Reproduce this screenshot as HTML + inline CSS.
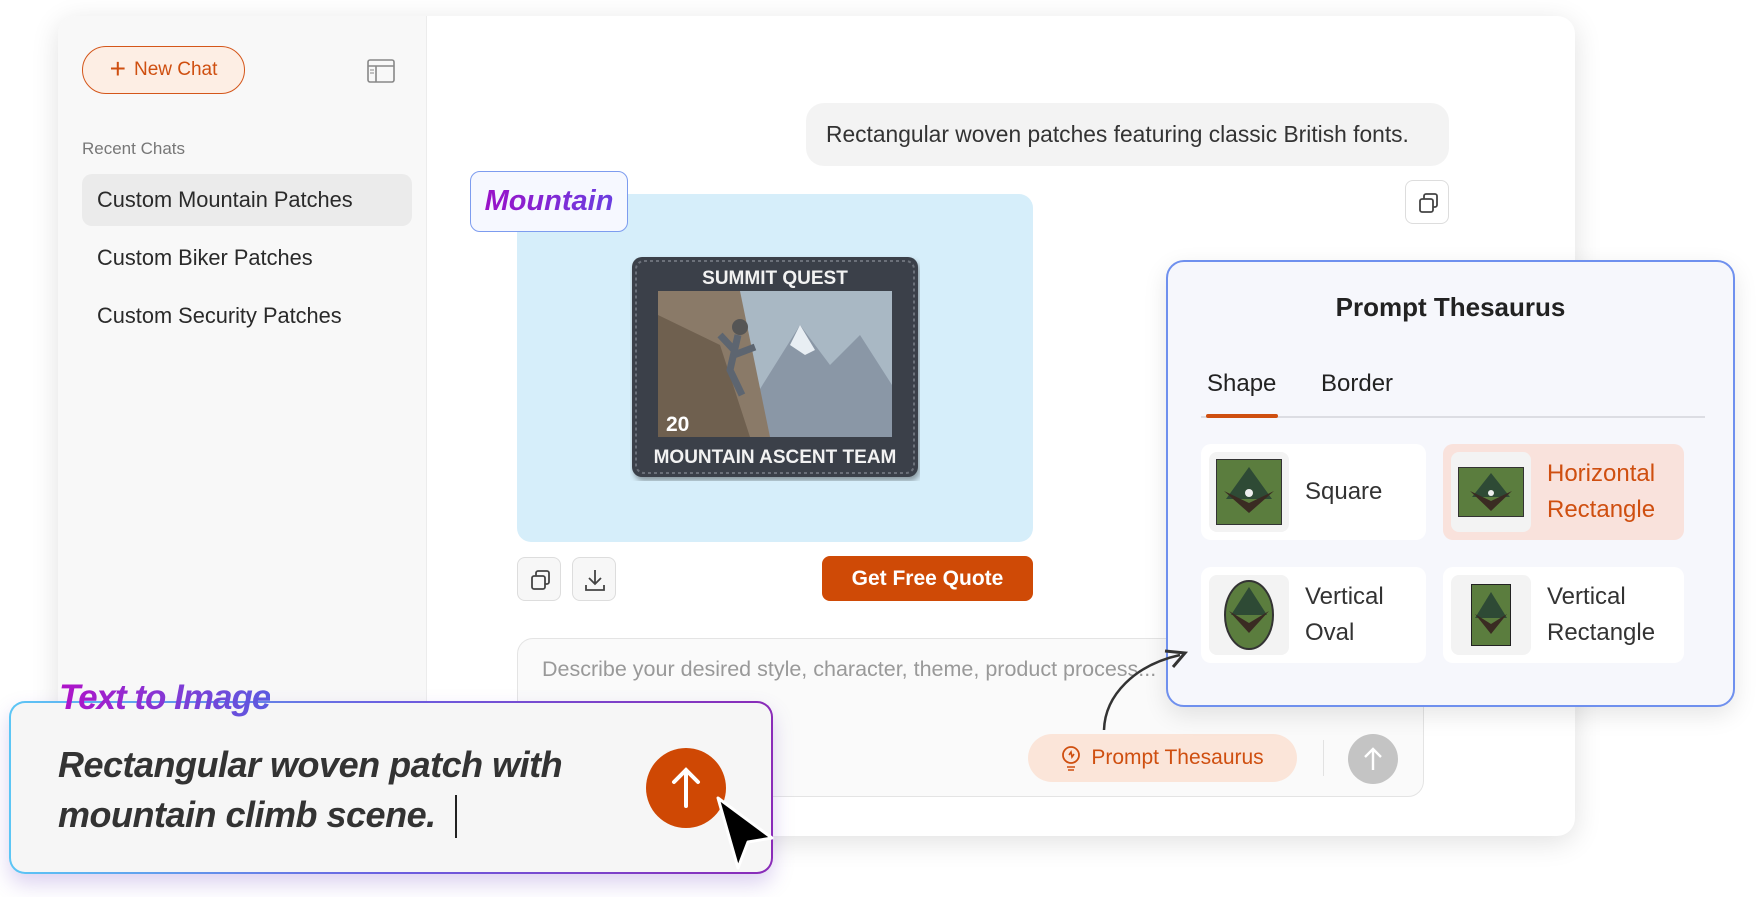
<!DOCTYPE html>
<html><head><meta charset="utf-8"><style>
*{box-sizing:border-box;margin:0;padding:0}
body{width:1757px;height:897px;background:#fff;font-family:"Liberation Sans","DejaVu Sans",sans-serif;position:relative;overflow:hidden;color:#333}
.abs{position:absolute}
.card{left:58px;top:16px;width:1517px;height:820px;background:#fff;border-radius:18px;box-shadow:0 6px 28px rgba(0,0,0,.12);overflow:hidden}
.side{left:0;top:0;width:369px;height:820px;background:#f8f8f8;border-right:1px solid #ececec}
.newchat{left:24px;top:30px;width:163px;height:48px;border:1.5px solid #d4561a;background:#fdeee4;border-radius:24px;color:#cf4f10;font-size:19px;display:flex;align-items:center;justify-content:center;gap:8px}
.item{left:24px;width:330px;height:52px;border-radius:10px;font-size:21.8px;color:#2a2a2a;padding-left:15px;line-height:52px}
.thumb{width:80px;height:80px;background:#f3f3f3;border-radius:8px;display:flex;align-items:center;justify-content:center}
.opt{width:225px;height:96px;background:#fff;border-radius:10px;display:flex;align-items:center;padding-left:8px;gap:16px;font-size:24px;color:#333;line-height:36px}
</style></head><body>
<div class="abs card">
  <div class="abs side">
    <div class="abs newchat"><span style="font-size:28px;line-height:1;margin-top:-3px">+</span>New Chat</div>
    <svg class="abs" style="left:309px;top:43px" width="28" height="24" viewBox="0 0 28 24"><rect x="1" y="1" width="26" height="22" rx="2" fill="none" stroke="#888" stroke-width="1.6"/><line x1="1" y1="7" x2="27" y2="7" stroke="#888" stroke-width="1.6"/><line x1="9" y1="7" x2="9" y2="23" stroke="#888" stroke-width="1.6"/><line x1="3" y1="11" x2="7" y2="11" stroke="#888"/><line x1="3" y1="14" x2="7" y2="14" stroke="#888"/></svg>
    <div class="abs" style="left:24px;top:123px;font-size:17px;color:#777">Recent Chats</div>
    <div class="abs item" style="top:158px;background:#ebebeb">Custom Mountain Patches</div>
    <div class="abs item" style="top:216px">Custom Biker Patches</div>
    <div class="abs item" style="top:274px">Custom Security Patches</div>
  </div>
  <div class="abs" style="left:748px;top:87px;width:643px;height:63px;background:#f3f3f3;border-radius:18px;font-size:22.8px;color:#333;line-height:63px;padding-left:20px;white-space:nowrap">Rectangular woven patches featuring classic British fonts.</div>
  <div class="abs" style="left:1347px;top:164px;width:44px;height:44px;border:1px solid #ddd;border-radius:8px;background:#fff"><svg width="44" height="44" viewBox="0 0 44 44"><rect x="14" y="18" width="13" height="13" rx="2" fill="none" stroke="#444" stroke-width="1.8"/><path d="M18 18v-3a2 2 0 0 1 2-2h9a2 2 0 0 1 2 2v9a2 2 0 0 1-2 2h-2" fill="none" stroke="#444" stroke-width="1.8"/></svg></div>
  <div class="abs" style="left:459px;top:178px;width:516px;height:348px;background:#d6eefa;border-radius:14px"></div>
  <svg class="abs" style="left:572px;top:239px" width="290" height="226" viewBox="0 0 290 226">
    <defs><filter id="sh"><feDropShadow dx="2" dy="4" stdDeviation="3" flood-opacity=".35"/></filter></defs>
    <rect x="2" y="2" width="286" height="220" rx="10" fill="#3a4048" filter="url(#sh)"/>
    <rect x="6" y="6" width="278" height="212" rx="8" fill="none" stroke="#6b7079" stroke-width="2" stroke-dasharray="3 3"/>
    <rect x="28" y="36" width="234" height="146" fill="#a9b8c4"/>
    <polygon points="100,182 170,70 200,110 230,80 262,130 262,182" fill="#8a97a6"/>
    <polygon points="170,70 185,95 175,100 160,90" fill="#e8eef3"/>
    <polygon points="28,36 110,36 140,182 28,182" fill="#8a7a68"/>
    <polygon points="28,60 90,90 120,182 28,182" fill="#6f604f"/>
    <circle cx="110" cy="72" r="8" fill="#555"/><path d="M108 80 L100 115 L112 140 M104 95 L90 80 M104 100 L125 92" stroke="#5d6570" stroke-width="7" fill="none"/>
    <text x="145" y="29" fill="#f2f2f2" font-size="19" font-weight="bold" text-anchor="middle" font-family="Liberation Sans">SUMMIT QUEST</text>
    <text x="36" y="176" fill="#fff" font-size="21" font-weight="bold" font-family="Liberation Sans">20</text>
    <text x="145" y="208" fill="#f2f2f2" font-size="19" font-weight="bold" text-anchor="middle" font-family="Liberation Sans">MOUNTAIN ASCENT TEAM</text>
  </svg>
  <div class="abs" style="left:412px;top:155px;width:158px;height:61px;border:1.5px solid #7d9cef;border-radius:10px;background:#f6f8ff;font-size:29px;font-weight:bold;font-style:italic;line-height:58px;text-align:center"><span style="background:linear-gradient(90deg,#9a12c8,#6a3ee0);-webkit-background-clip:text;color:transparent">Mountain</span></div>
  <div class="abs" style="left:459px;top:541px;width:44px;height:44px;border:1px solid #ddd;border-radius:8px;background:#f7f7f7"><svg width="44" height="44" viewBox="0 0 44 44"><rect x="14" y="18" width="13" height="13" rx="2" fill="none" stroke="#444" stroke-width="1.8"/><path d="M18 18v-3a2 2 0 0 1 2-2h9a2 2 0 0 1 2 2v9a2 2 0 0 1-2 2h-2" fill="none" stroke="#444" stroke-width="1.8"/></svg></div>
  <div class="abs" style="left:514px;top:541px;width:44px;height:44px;border:1px solid #ddd;border-radius:8px;background:#f7f7f7"><svg width="44" height="44" viewBox="0 0 44 44"><path d="M22 12v14M16 20l6 6 6-6M13 27v5h18v-5" fill="none" stroke="#444" stroke-width="1.8"/></svg></div>
  <div class="abs" style="left:764px;top:540px;width:211px;height:45px;background:#cf4a06;border-radius:8px;color:#fff;font-size:21px;font-weight:bold;text-align:center;line-height:45px">Get Free Quote</div>
  <div class="abs" style="left:459px;top:622px;width:907px;height:159px;border:1px solid #e4e4e4;border-radius:16px;background:#fafafa"></div>
  <div class="abs" style="left:484px;top:641px;font-size:21.5px;color:#999;white-space:nowrap">Describe your desired style, character, theme, product process...</div>
  <div class="abs" style="left:970px;top:718px;width:269px;height:48px;background:#fbe5d9;border-radius:24px;color:#cf4f10;font-size:21px;display:flex;align-items:center;justify-content:center;gap:10px"><svg width="20" height="26" viewBox="0 0 20 26"><circle cx="10" cy="10" r="8" fill="none" stroke="#cf4f10" stroke-width="1.8"/><path d="M6 22h8M7 25h6M8 10l2-3 1 5 2-3" fill="none" stroke="#cf4f10" stroke-width="1.6"/></svg>Prompt Thesaurus</div>
  <div class="abs" style="left:1265px;top:724px;width:1px;height:36px;background:#e2e2e2"></div>
  <div class="abs" style="left:1290px;top:718px;width:50px;height:50px;border-radius:50%;background:#c4c4c4"><svg width="50" height="50" viewBox="0 0 50 50"><path d="M25 36V15M17 23l8-8 8 8" fill="none" stroke="#fff" stroke-width="2.4"/></svg></div>
</div>
<div class="abs" style="left:1166px;top:260px;width:569px;height:447px;border:2px solid #6f90ee;border-radius:18px;background:#f6f7fc;box-shadow:0 8px 24px rgba(0,0,0,.1)">
  <div class="abs" style="left:0;top:30px;width:565px;text-align:center;font-size:26px;font-weight:bold;color:#222">Prompt Thesaurus</div>
  <div class="abs" style="left:39px;top:108px;font-size:24px;color:#222">Shape</div>
  <div class="abs" style="left:153px;top:108px;font-size:24px;color:#222">Border</div>
  <div class="abs" style="left:33px;top:154px;width:504px;height:2px;background:#dcdde3"></div>
  <div class="abs" style="left:38px;top:152px;width:72px;height:4px;background:#cf4f10;border-radius:2px"></div>
  <div class="abs opt" style="left:33px;top:182px"><div class="thumb"><svg width="66" height="66"><rect x="0" y="0" width="66" height="66" fill="#5b7d3e" stroke="#333" stroke-width="2"/><path d="M10 40 L33 8 L56 40 Z" fill="#2e4a35"/><path d="M8 32 L33 44 L58 32 L33 54 Z" fill="#3a2b22"/><circle cx="33" cy="34" r="4" fill="#eee"/></svg></div>Square</div>
  <div class="abs opt" style="left:275px;top:182px;width:241px;background:#f9e2dc;color:#cf4f10"><div class="thumb"><svg width="66" height="50"><rect x="0" y="0" width="66" height="50" fill="#5b7d3e" stroke="#333" stroke-width="2"/><path d="M14 30 L33 6 L52 30 Z" fill="#2e4a35"/><path d="M12 24 L33 34 L54 24 L33 44 Z" fill="#3a2b22"/><circle cx="33" cy="26" r="3" fill="#eee"/></svg></div>Horizontal<br>Rectangle</div>
  <div class="abs opt" style="left:33px;top:305px"><div class="thumb"><svg width="52" height="72"><ellipse cx="26" cy="36" rx="24" ry="34" fill="#5b7d3e" stroke="#333" stroke-width="2"/><path d="M8 36 L26 8 L44 36 Z" fill="#2e4a35"/><path d="M6 32 L26 44 L46 32 L26 54 Z" fill="#3a2b22"/></svg></div>Vertical<br>Oval</div>
  <div class="abs opt" style="left:275px;top:305px;width:241px"><div class="thumb"><svg width="40" height="62"><rect x="0" y="0" width="40" height="62" fill="#5b7d3e" stroke="#222" stroke-width="2"/><path d="M4 34 L20 8 L36 34 Z" fill="#2e4a35"/><path d="M4 30 L20 40 L36 30 L20 50 Z" fill="#3a2b22"/></svg></div>Vertical<br>Rectangle</div>
</div>
<svg class="abs" style="left:1095px;top:645px" width="100" height="90" viewBox="0 0 100 90"><path d="M9 85 C10 50 40 20 85 10" fill="none" stroke="#333" stroke-width="2.5"/><path d="M70 6 L90 8 L78 22" fill="none" stroke="#333" stroke-width="3"/></svg>
<div class="abs" style="left:9px;top:701px;width:764px;height:173px;border-radius:16px;padding:2px;background:linear-gradient(90deg,#5cc6f5,#6b5fe0 50%,#8a2bb8);box-shadow:0 10px 20px rgba(120,80,200,.25)"><div style="width:100%;height:100%;background:#f6f6f6;border-radius:14px"></div></div>
<div class="abs" style="left:59px;top:678px;font-size:35px;font-weight:bold;font-style:italic;background:linear-gradient(90deg,#b012c8,#5b5be0);-webkit-background-clip:text;color:transparent;letter-spacing:-1px">Text to Image</div>
<div class="abs" style="left:58px;top:740px;font-size:36px;font-weight:bold;font-style:italic;color:#333;line-height:50px;letter-spacing:-.5px">Rectangular woven patch with<br>mountain climb scene.</div>
<div class="abs" style="left:455px;top:795px;width:2px;height:43px;background:#222"></div>
<div class="abs" style="left:646px;top:748px;width:80px;height:80px;border-radius:50%;background:#cf4804"><svg width="80" height="80" viewBox="0 0 80 80"><path d="M40 58V22M28 34l12-12 12 12" fill="none" stroke="#fff" stroke-width="4" stroke-linecap="round"/></svg></div>
<svg class="abs" style="left:712px;top:794px" width="66" height="80" viewBox="0 0 66 80"><path d="M6 4 L60 44 L36 48 L26 74 Z" fill="#000" stroke="#fff" stroke-width="3" stroke-linejoin="round"/></svg>
</body></html>
